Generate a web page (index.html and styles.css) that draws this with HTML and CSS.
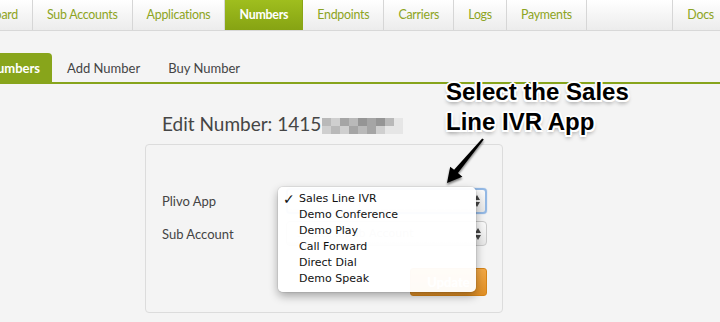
FILE: index.html
```html
<!DOCTYPE html>
<html>
<head>
<meta charset="utf-8">
<title>Edit Number</title>
<link rel="stylesheet" href="styles.css">
</head>
<body>
<nav class="topnav">
  <a class="tab first">Dashboard</a>
  <a class="tab">Sub Accounts</a>
  <a class="tab">Applications</a>
  <a class="tab active">Numbers</a>
  <a class="tab">Endpoints</a>
  <a class="tab">Carriers</a>
  <a class="tab">Logs</a>
  <a class="tab">Payments</a>
  <span class="spacer"></span>
  <a class="tab docs">Docs</a>
</nav>
<div class="subnav">
  <a class="subtab active">Numbers</a>
  <a class="subtab">Add Number</a>
  <a class="subtab">Buy Number</a>
</div>
<main class="content">
  <h1 class="title">Edit Number: 1415<span class="mosaic"><i class="m3"></i><i class="m2"></i><i class="m4"></i><i class="m3"></i><i class="m5"></i><i class="m4"></i><i class="m5"></i><i class="m3"></i><i class="m1"></i><i class="m2"></i><i class="m3"></i><i class="m2"></i><i class="m4"></i><i class="m3"></i><i class="m4"></i><i class="m2"></i><i class="m1"></i><i class="m1"></i></span></h1>
  <form class="panel">
    <div class="row">
      <label class="label">Plivo App</label>
      <div class="select focus"><span class="value hidden">Sales Line IVR</span><span class="spin"></span></div>
    </div>
    <div class="row">
      <label class="label">Sub Account</label>
      <div class="select"><span class="value muted">Select a Sub Account</span><span class="spin"></span></div>
    </div>
    <div class="actions">
      <button type="button" class="btn">Update</button>
    </div>
  </form>
</main>

<ul class="menu">
  <li class="item checked">Sales Line IVR</li>
  <li class="item">Demo Conference</li>
  <li class="item">Demo Play</li>
  <li class="item">Call Forward</li>
  <li class="item">Direct Dial</li>
  <li class="item">Demo Speak</li>
</ul>

<div class="callout">Select the Sales<br>Line IVR App</div>
<svg class="arrow" width="56" height="60" viewBox="0 0 56 60">
  <defs>
    <filter id="sh" x="-30%" y="-30%" width="160%" height="160%">
      <feGaussianBlur in="SourceAlpha" stdDeviation="1.3"/>
      <feOffset dx="0" dy="2" result="b"/>
      <feComponentTransfer><feFuncA type="linear" slope="0.5"/></feComponentTransfer>
      <feMerge><feMergeNode/><feMergeNode in="SourceGraphic"/></feMerge>
    </filter>
  </defs>
  <polygon filter="url(#sh)" fill="#000" points="45.2,4.4 46.8,5.6 20.9,38.9 25.4,42.8 10,49 13.2,32.8 17.1,35.7"/>
</svg>
</body>
</html>
```

FILE: styles.css
```css
* { box-sizing: border-box; }
html, body { margin: 0; padding: 0; }
body {
  background: #f4f4f4;
  font-family: Lato, "Open Sans", sans-serif;
  width: 720px;
  height: 322px;
  overflow: hidden;
  position: relative;
}

.topnav {
  display: flex;
  height: 31px;
  background: linear-gradient(#ffffff, #ececec);
  border-bottom: 1px solid #d8d8d8;
}
.tab {
  display: flex;
  align-items: center;
  padding: 0 14px 1px;
  font-size: 12.4px;
  letter-spacing: -0.25px;
  color: #8da422;
  border-right: 1px solid #d6d6d6;
  white-space: nowrap;
}
.tab.first { width: 33px; justify-content: flex-end; }
.tab.active {
  background: linear-gradient(#9fbe1e, #86a313);
  color: #fff;
  font-weight: bold;
  border-right-color: #8aa516;
}
.tab.docs { border-right: 0; border-left: 1px solid #d6d6d6; padding: 0 6px 1px 14px; }
.spacer { flex: 1; }

.subnav {
  display: flex;
  align-items: flex-end;
  height: 84px;
  border-bottom: 2px solid #87a41c;
  margin-top: -31px;
  padding-top: 53px;
}
.subtab {
  display: flex;
  align-items: center;
  height: 29px;
  padding: 0 14px;
  font-size: 13px;
  color: #444;
  white-space: nowrap;
}
.subtab.active {
  width: 52px;
  justify-content: flex-end;
  padding-right: 12px;
  background: #88a51b;
  color: #fff;
  font-weight: bold;
  border-radius: 0 4px 0 0;
  margin-right: 1px;
}

.content {
  margin-left: 145px;
  width: 358px;
}
.title {
  margin: 28px 0 8px 17px;
  font-size: 19px;
  line-height: 24px;
  font-weight: normal;
  color: #454545;
  white-space: nowrap;
  display: flex;
  align-items: center;
}
.mosaic {
  display: grid;
  grid-template-columns: repeat(9, 9px);
  grid-template-rows: 8px 8px;
  margin-left: 1px;
  margin-top: 4px;
}
.mosaic i { display: block; }
.m1 { background: #e6e6e6; }
.m2 { background: #cfcfcf; }
.m3 { background: #b9b9b9; }
.m4 { background: #a5a5a5; }
.m5 { background: #959595; }

.panel {
  margin: 0;
  height: 169px;
  border: 1px solid #dcdcdc;
  border-radius: 4px;
  padding: 43px 15px 0 16px;
  display: flex;
  flex-direction: column;
}
.row {
  display: flex;
  align-items: center;
  margin-bottom: 7px;
}
.label {
  width: 124px;
  font-size: 13px;
  color: #444;
}
.select {
  flex: 1;
  height: 26px;
  border: 1px solid #c9c9c9;
  border-radius: 4px;
  background: linear-gradient(#fafafa, #e6e6e6);
  display: flex;
  align-items: center;
  justify-content: space-between;
  padding: 0 4px 0 10px;
  font-family: "DejaVu Sans", sans-serif;
  font-size: 11px;
  color: #333;
}
.row + .row .select { height: 25px; }
.select.focus {
  border: 2px solid #93b8e4;
  box-shadow: 0 0 1px #7aa6db;
}
.hidden { visibility: hidden; }
.muted { color: #aaa; }
.spin {
  width: 7px;
  height: 12px;
  position: relative;
}
.spin::before, .spin::after {
  content: "";
  position: absolute;
  left: 0;
  border-left: 3.5px solid transparent;
  border-right: 3.5px solid transparent;
}
.spin::before { top: 0; border-bottom: 5px solid #444; }
.spin::after { bottom: 0; border-top: 5px solid #444; }

.actions {
  display: flex;
  justify-content: flex-end;
  margin-top: 15px;
}
.btn {
  width: 77px;
  height: 28px;
  border: 1px solid #d58418;
  border-radius: 3px;
  background: linear-gradient(#f2a846, #e08f25);
  color: #fff;
  font-family: Lato, sans-serif;
  font-size: 13px;
  font-weight: bold;
}

.menu {
  position: absolute;
  left: 278px;
  top: 187px;
  width: 198px;
  height: 105px;
  margin: 0;
  padding: 4px 0 0 0;
  list-style: none;
  background: rgba(255,255,255,0.96);
  border-radius: 5px;
  box-shadow: 0 4px 10px rgba(0,0,0,0.33), 0 0 0 1px rgba(0,0,0,0.06);
  font-family: "DejaVu Sans", sans-serif;
  font-size: 11px;
  color: #111;
}
.item {
  height: 16px;
  line-height: 16px;
  padding-left: 21px;
  position: relative;
  white-space: nowrap;
}
.item.checked::before {
  content: "\2713";
  position: absolute;
  left: 5px;
  top: 0;
  font-size: 14px;
  font-weight: bold;
}

.callout {
  position: absolute;
  left: 446px;
  top: 77px;
  font-family: "Liberation Sans", Arial, sans-serif;
  font-weight: bold;
  font-size: 24px;
  line-height: 30px;
  color: #000;
  white-space: nowrap;
  text-shadow:
    -2px 0 0 #fff, 2px 0 0 #fff, 0 -2px 0 #fff, 0 2px 0 #fff,
    -1.5px -1.5px 0 #fff, 1.5px -1.5px 0 #fff, -1.5px 1.5px 0 #fff, 1.5px 1.5px 0 #fff,
    0 3px 4px rgba(0,0,0,0.45);
}
.arrow {
  position: absolute;
  left: 437px;
  top: 134px;
}
```
